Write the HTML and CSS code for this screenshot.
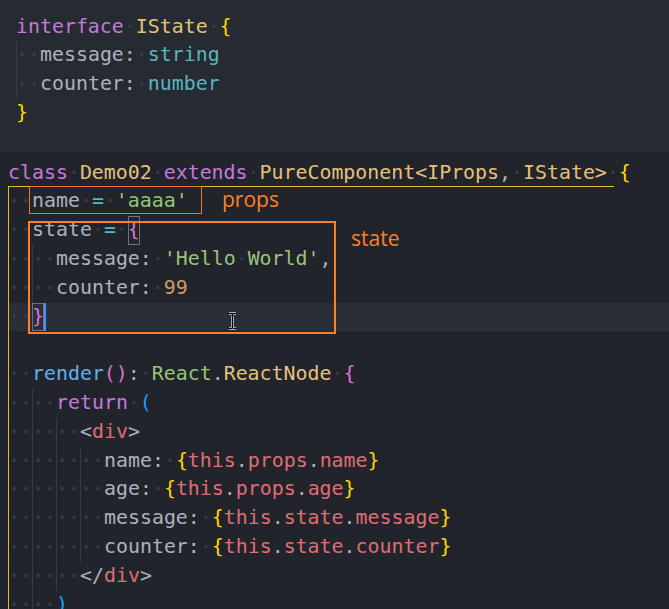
FILE: index.html
```html
<!DOCTYPE html>
<html lang="en">

<head>
  <meta charset="UTF-8" />
  <meta name="viewport" content="width=device-width, initial-scale=1.0" />
  <title>Demo02</title>
  <link rel="stylesheet" href="styles.css">
</head>

<body>
  <div class="editor">
    <!-- 上面的接口定义 -->
    <div class="top">
      <div class="ln"><span class="k">interface</span><span class="w">·</span><span class="t">IState</span><span class="w">·</span><span class="b1">{</span></div>
      <div class="ln"><span class="ind">··</span>message:<span class="w">·</span><span class="c">string</span></div>
      <div class="ln"><span class="ind">··</span>counter:<span class="w">·</span><span class="c">number</span></div>
      <div class="ln"><span class="b1">}</span></div>
    </div>

    <!-- 类组件 -->
    <div class="bottom">
      <div class="ln cls"><span class="k">class</span><span class="w">·</span><span class="t">Demo02</span><span class="w">·</span><span class="k">extends</span><span class="w">·</span><span class="t">PureComponent&lt;IProps</span>,<span class="w">·</span><span class="t">IState&gt;</span><span class="w">·</span><span class="b1">{</span></div>
      <div class="ln"><span class="ind g">··</span>name<span class="w">·</span><span class="c">=</span><span class="w">·</span><span class="s">'aaaa'</span></div>
      <div class="ln"><span class="ind g">··</span>state<span class="w">·</span><span class="c">=</span><span class="w">·</span><span class="b2 bm">{</span></div>
      <div class="ln"><span class="ind g">··</span><span class="ind">··</span>message:<span class="w">·</span><span class="s">'Hello<span class="w">·</span>World'</span>,</div>
      <div class="ln"><span class="ind g">··</span><span class="ind">··</span>counter:<span class="w">·</span><span class="n">99</span></div>
      <div class="ln cur"><span class="ind g">··</span><span class="b2 bm">}</span><span class="caret"></span></div>
      <div class="ln"><span class="ind g">  </span></div>
      <div class="ln"><span class="ind g">··</span><span class="f">render</span><span class="b2">()</span>:<span class="w">·</span><span class="s">React</span>.<span class="t">ReactNode</span><span class="w">·</span><span class="b2">{</span></div>
      <div class="ln"><span class="ind g">··</span><span class="ind">··</span><span class="k">return</span><span class="w">·</span><span class="b3">(</span></div>
      <div class="ln"><span class="ind g">··</span><span class="ind">··</span><span class="ind">··</span>&lt;<span class="r">div</span>&gt;</div>
      <div class="ln"><span class="ind g">··</span><span class="ind">··</span><span class="ind">··</span><span class="ind">··</span>name:<span class="w">·</span><span class="b1">{</span><span class="r">this</span>.<span class="r">props</span>.<span class="r">name</span><span class="b1">}</span></div>
      <div class="ln"><span class="ind g">··</span><span class="ind">··</span><span class="ind">··</span><span class="ind">··</span>age:<span class="w">·</span><span class="b1">{</span><span class="r">this</span>.<span class="r">props</span>.<span class="r">age</span><span class="b1">}</span></div>
      <div class="ln"><span class="ind g">··</span><span class="ind">··</span><span class="ind">··</span><span class="ind">··</span>message:<span class="w">·</span><span class="b1">{</span><span class="r">this</span>.<span class="r">state</span>.<span class="r">message</span><span class="b1">}</span></div>
      <div class="ln"><span class="ind g">··</span><span class="ind">··</span><span class="ind">··</span><span class="ind">··</span>counter:<span class="w">·</span><span class="b1">{</span><span class="r">this</span>.<span class="r">state</span>.<span class="r">counter</span><span class="b1">}</span></div>
      <div class="ln"><span class="ind g">··</span><span class="ind">··</span><span class="ind">··</span>&lt;/<span class="r">div</span>&gt;</div>
      <div class="ln"><span class="ind g">··</span><span class="ind">··</span><span class="b3">)</span></div>
      <div class="ln"><span class="ind g">··</span><span class="b2">}</span></div>
    </div>

    <!-- 标注 -->
    <div class="mark mark-props"></div>
    <div class="mark mark-state"></div>
    <span class="label label-props">props</span>
    <span class="label label-state">state</span>
    <svg class="ibeam" width="9" height="18" viewBox="0 0 9 18">
      <path d="M1 1.5h2.5L4.5 2.5L5.5 1.5H8M4.5 2.5V15.5M1 16.5h2.5L4.5 15.5L5.5 16.5H8" fill="none" stroke="#ddd" stroke-width="2.6" />
      <path d="M1 1.5h2.5L4.5 2.5L5.5 1.5H8M4.5 2.5V15.5M1 16.5h2.5L4.5 15.5L5.5 16.5H8" fill="none" stroke="#000" stroke-width="1.2" />
    </svg>
  </div>
</body>

</html>
```

FILE: styles.css
```css
* {
  margin: 0;
  padding: 0;
}

html,
body {
  background: #21252b;
  overflow: hidden;
}

.editor {
  position: relative;
  width: 669px;
  height: 609px;
  overflow: hidden;
  font: 19.9px/28.8px 'DejaVu Sans Mono', 'Liberation Mono', monospace;
  color: #abb2bf;
}

.ln {
  height: 28.8px;
  white-space: pre;
}

.top {
  height: 152px;
  box-sizing: border-box;
  padding: 12.6px 0 0 16px;
  background: #262a31;
}

.bottom {
  padding: 6.6px 0 0 8px;
  background: #21252b;
}

/* 语法颜色 */
.k {
  color: #c678dd;
}

.t {
  color: #e5c07b;
}

.c {
  color: #56b6c2;
}

.s {
  color: #98c379;
}

.n {
  color: #d19a66;
}

.f {
  color: #61afef;
}

.r {
  color: #e06c75;
}

.b1 {
  color: #ffd700;
}

.b2 {
  color: #da70d6;
}

.b3 {
  color: #179fff;
}

.w {
  color: #3b414b;
}

/* 缩进参考线 */
.ind {
  display: inline-block;
  width: 24px;
  color: #3b414b;
  background: linear-gradient(#363b44, #363b44) 0 0 / 1px 100% no-repeat;
}

.ind.g {
  background: linear-gradient(#e5b72a, #e5b72a) 0 0 / 1px 100% no-repeat;
}

.cls {
  background: linear-gradient(#e5b72a, #e5b72a) left bottom / 606px 1px no-repeat;
}

.cur {
  background: #2a2e36;
}

.bm {
  display: inline-block;
  box-shadow: inset 0 0 0 1px #6e747f;
}

.caret {
  display: inline-block;
  width: 2px;
  height: 28.8px;
  vertical-align: top;
  background: #528bff;
}

/* 橙色标注框 */
.mark {
  position: absolute;
  box-sizing: border-box;
}

.mark-props {
  left: 29px;
  top: 186px;
  width: 173px;
  height: 28px;
  border: 1.5px solid #e8772c;
}

.mark-state {
  left: 28px;
  top: 221px;
  width: 308px;
  height: 113px;
  border: 2px solid #ff7f27;
}

.label {
  position: absolute;
  font: 21px/1 'Open Sans', 'Noto Sans CJK SC', sans-serif;
  color: #ff7f27;
}

.label-props {
  left: 222px;
  top: 189px;
}

.label-state {
  left: 351px;
  top: 228px;
}

.ibeam {
  position: absolute;
  left: 228px;
  top: 312px;
}
```
